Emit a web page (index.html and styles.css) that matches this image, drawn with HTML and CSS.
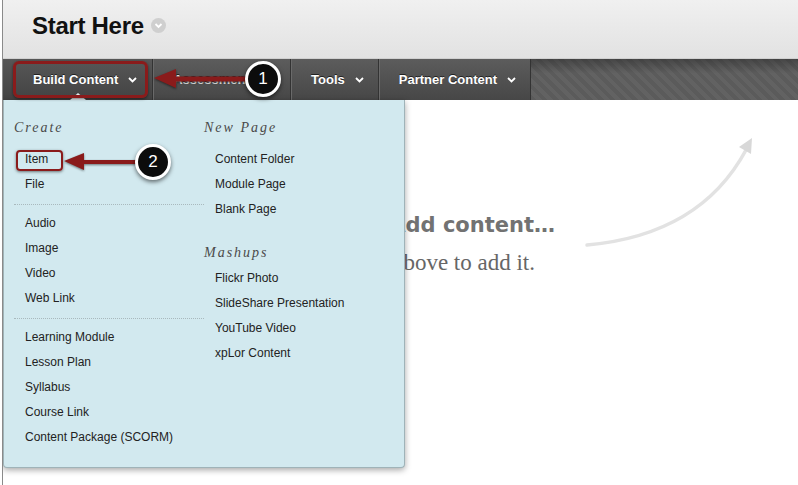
FILE: index.html
```html
<!DOCTYPE html>
<html lang="en">
  <head>
    <meta charset="UTF-8" />
    <meta name="viewport" content="width=device-width, initial-scale=1.0" />
    <title>Start Here</title>
    <link rel="stylesheet" href="styles.css">
  </head>
  <body>
    <div class="page">
      <header class="page-header">
        <h1>Start Here</h1>
        <span class="title-menu">
          <svg width="15" height="15" viewBox="0 0 15 15"><circle cx="7.5" cy="7.5" r="7.5" fill="#cfcfcf"/><path d="M4.5 6 L7.5 9 L10.5 6" fill="none" stroke="#fff" stroke-width="1.8"/></svg>
        </span>
      </header>

      <nav class="action-bar">
        <a class="action action-active">Build Content
          <svg class="chev" width="9" height="6" viewBox="0 0 9 6"><path d="M1 1 L4.5 4.5 L8 1" fill="none" stroke="#fff" stroke-width="1.8"/></svg>
        </a>
        <a class="action action-muted">Assessments
          <svg class="chev" width="9" height="6" viewBox="0 0 9 6"><path d="M1 1 L4.5 4.5 L8 1" fill="none" stroke="#fff" stroke-width="1.8"/></svg>
        </a>
        <a class="action">Tools
          <svg class="chev" width="9" height="6" viewBox="0 0 9 6"><path d="M1 1 L4.5 4.5 L8 1" fill="none" stroke="#fff" stroke-width="1.8"/></svg>
        </a>
        <a class="action">Partner Content
          <svg class="chev" width="9" height="6" viewBox="0 0 9 6"><path d="M1 1 L4.5 4.5 L8 1" fill="none" stroke="#fff" stroke-width="1.8"/></svg>
        </a>
        <div class="stripes"></div>
      </nav>

      <main class="content">
        <div class="empty">
          <div class="empty-text">
            <p class="empty-title">Add content…</p>
            <p class="empty-sub">Use a menu above to add it.</p>
          </div>
          <svg class="hint-arrow" width="180" height="112" viewBox="0 0 180 112">
            <path d="M7 107 Q120 97 166 12" fill="none" stroke="#e2e2e2" stroke-width="3.5" stroke-linecap="round"/>
            <polygon points="172,0 159,9 171,16" fill="#d8d8d8"/>
          </svg>
        </div>
      </main>

      <div class="dropdown">
        <div class="menu-col menu-col-left">
          <h3 class="menu-head">Create</h3>
          <ul class="menu-list">
            <li>Item</li>
            <li>File</li>
          </ul>
          <div class="menu-sep"></div>
          <ul class="menu-list">
            <li>Audio</li>
            <li>Image</li>
            <li>Video</li>
            <li>Web Link</li>
          </ul>
          <div class="menu-sep"></div>
          <ul class="menu-list">
            <li>Learning Module</li>
            <li>Lesson Plan</li>
            <li>Syllabus</li>
            <li>Course Link</li>
            <li>Content Package (SCORM)</li>
          </ul>
        </div>
        <div class="menu-col">
          <h3 class="menu-head">New Page</h3>
          <ul class="menu-list">
            <li>Content Folder</li>
            <li>Module Page</li>
            <li>Blank Page</li>
          </ul>
          <h3 class="menu-head menu-head-next">Mashups</h3>
          <ul class="menu-list">
            <li>Flickr Photo</li>
            <li>SlideShare Presentation</li>
            <li>YouTube Video</li>
            <li>xpLor Content</li>
          </ul>
        </div>
      </div>

      <!-- tutorial callouts -->
      <div class="callout-box callout-box-1"></div>
      <svg class="callout-arrow callout-arrow-1" width="100" height="26" viewBox="0 0 100 26">
        <line x1="18" y1="13" x2="100" y2="13" stroke="#8a1b1b" stroke-width="5"/>
        <polygon points="2,12 24,3 24,22" fill="#8a1b1b"/>
      </svg>
      <div class="step step-1">1</div>

      <div class="callout-box callout-box-2"></div>
      <svg class="callout-arrow callout-arrow-2" width="80" height="24" viewBox="0 0 80 24">
        <line x1="16" y1="12" x2="80" y2="12" stroke="#8a1b1b" stroke-width="4"/>
        <polygon points="2,11 22,3 22,20" fill="#8a1b1b"/>
      </svg>
      <div class="step step-2">2</div>
    </div>
  </body>
</html>
```

FILE: styles.css
```css
body {
  margin: 0;
  font-family: "Liberation Sans", Arial, sans-serif;
  background: #fff;
}
.page {
  position: relative;
  margin-left: 2px;
  border-left: 1px solid #8a8a8a;
  height: 485px;
  overflow: hidden;
}
.page-header {
  display: flex;
  align-items: flex-start;
  height: 59px;
  padding: 12px 0 0 29px;
  box-sizing: border-box;
  background: linear-gradient(#f0f0f0, #e2e2e2);
  border-bottom: 1px solid #d0d0d0;
}
.page-header h1 {
  margin: 0;
  font-size: 24px;
  line-height: 28px;
  font-weight: bold;
  color: #111;
  letter-spacing: -0.3px;
}
.title-menu {
  display: flex;
  margin: 6px 0 0 7px;
}
.action-bar {
  display: flex;
  height: 41px;
  background: linear-gradient(#5c5c5c, #474747);
}
.action {
  display: flex;
  align-items: center;
  gap: 10px;
  padding: 0 14px 0 20px;
  font-size: 13px;
  font-weight: bold;
  color: #fff;
  text-shadow: 0 -1px 0 #222;
  border-right: 1px solid #333;
  box-shadow: inset 1px 0 0 #6a6a6a;
}
.action-active {
  padding: 0 15px 0 30px;
  background: linear-gradient(#575757, #434343);
  box-shadow: none;
}
.action-muted {
  color: #e4e4e4;
}
.chev {
  display: block;
}
.stripes {
  flex: 1;
  background:
    linear-gradient(rgba(0, 0, 0, 0.28), rgba(0, 0, 0, 0) 35%),
    repeating-linear-gradient(45deg, #5b5b5b 0 4px, #626262 4px 8px);
}
.content {
  height: 385px;
  overflow: hidden;
}
.empty {
  display: flex;
  justify-content: flex-end;
  align-items: flex-start;
  padding: 38px 38px 0 0;
}
.empty-text {
  display: flex;
  flex-direction: column;
  align-items: flex-end;
  flex-shrink: 0;
  margin-top: 74px;
  margin-right: 25px;
  white-space: nowrap;
}
.empty-text p {
  margin: 0;
}
.empty-title {
  font-family: "DejaVu Sans", sans-serif;
  font-weight: bold;
  font-size: 21px;
  line-height: 26px;
  color: #727272;
}
.empty-sub {
  margin-top: 12px !important;
  margin-right: 20px !important;
  font-family: "Liberation Serif", serif;
  font-size: 23px;
  line-height: 26px;
  color: #666;
}
.hint-arrow {
  flex-shrink: 0;
}
.dropdown {
  position: absolute;
  top: 100px;
  left: 0;
  width: 402px;
  height: 368px;
  box-sizing: border-box;
  display: flex;
  padding: 16px 10px 20px;
  background: #d2e9ef;
  border: 1px solid #9fb3b8;
  border-top: none;
  border-radius: 0 0 4px 4px;
  box-shadow: 0 2px 6px rgba(0, 0, 0, 0.35);
}
.dropdown::before {
  content: "";
  position: absolute;
  top: -7px;
  left: 66px;
  border-left: 8px solid transparent;
  border-right: 8px solid transparent;
  border-bottom: 7px solid #dfe9ec;
}
.menu-col-left {
  width: 190px;
}
.menu-head {
  margin: 0 0 7px;
  font-family: "Liberation Serif", serif;
  font-style: italic;
  font-weight: normal;
  font-size: 14px;
  line-height: 24px;
  letter-spacing: 2px;
  color: #4a4a4a;
}
.menu-head-next {
  margin: 19px 0 1px;
}
.menu-list {
  list-style: none;
  margin: 0;
  padding: 0 0 0 11px;
}
.menu-list li {
  font-size: 12px;
  line-height: 25px;
  color: #222;
  white-space: nowrap;
}
.menu-sep {
  margin: 7px 0 6px;
  border-top: 1px dotted #a9b9bd;
}
.callout-box {
  position: absolute;
  box-sizing: border-box;
  border: 3px solid #8a1b1b;
  border-radius: 6px;
  box-shadow: 0 1px 3px rgba(0, 0, 0, 0.5);
}
.callout-box-1 {
  left: 10px;
  top: 61px;
  width: 135px;
  height: 37px;
}
.callout-box-2 {
  left: 13px;
  top: 150px;
  width: 47px;
  height: 21px;
  border-width: 2px;
  border-radius: 4px;
}
.callout-arrow {
  position: absolute;
  filter: drop-shadow(0 1px 1px rgba(0, 0, 0, 0.5));
}
.callout-arrow-1 {
  left: 149px;
  top: 66px;
}
.callout-arrow-2 {
  left: 59px;
  top: 150px;
}
.step {
  position: absolute;
  width: 36px;
  height: 36px;
  box-sizing: border-box;
  border: 3px solid #fff;
  border-radius: 50%;
  background: #0c0c0c;
  color: #fff;
  font-size: 17px;
  line-height: 30px;
  text-align: center;
  box-shadow: 0 2px 4px rgba(0, 0, 0, 0.55);
}
.step-1 {
  left: 242px;
  top: 61px;
}
.step-2 {
  left: 132px;
  top: 144px;
}
```
